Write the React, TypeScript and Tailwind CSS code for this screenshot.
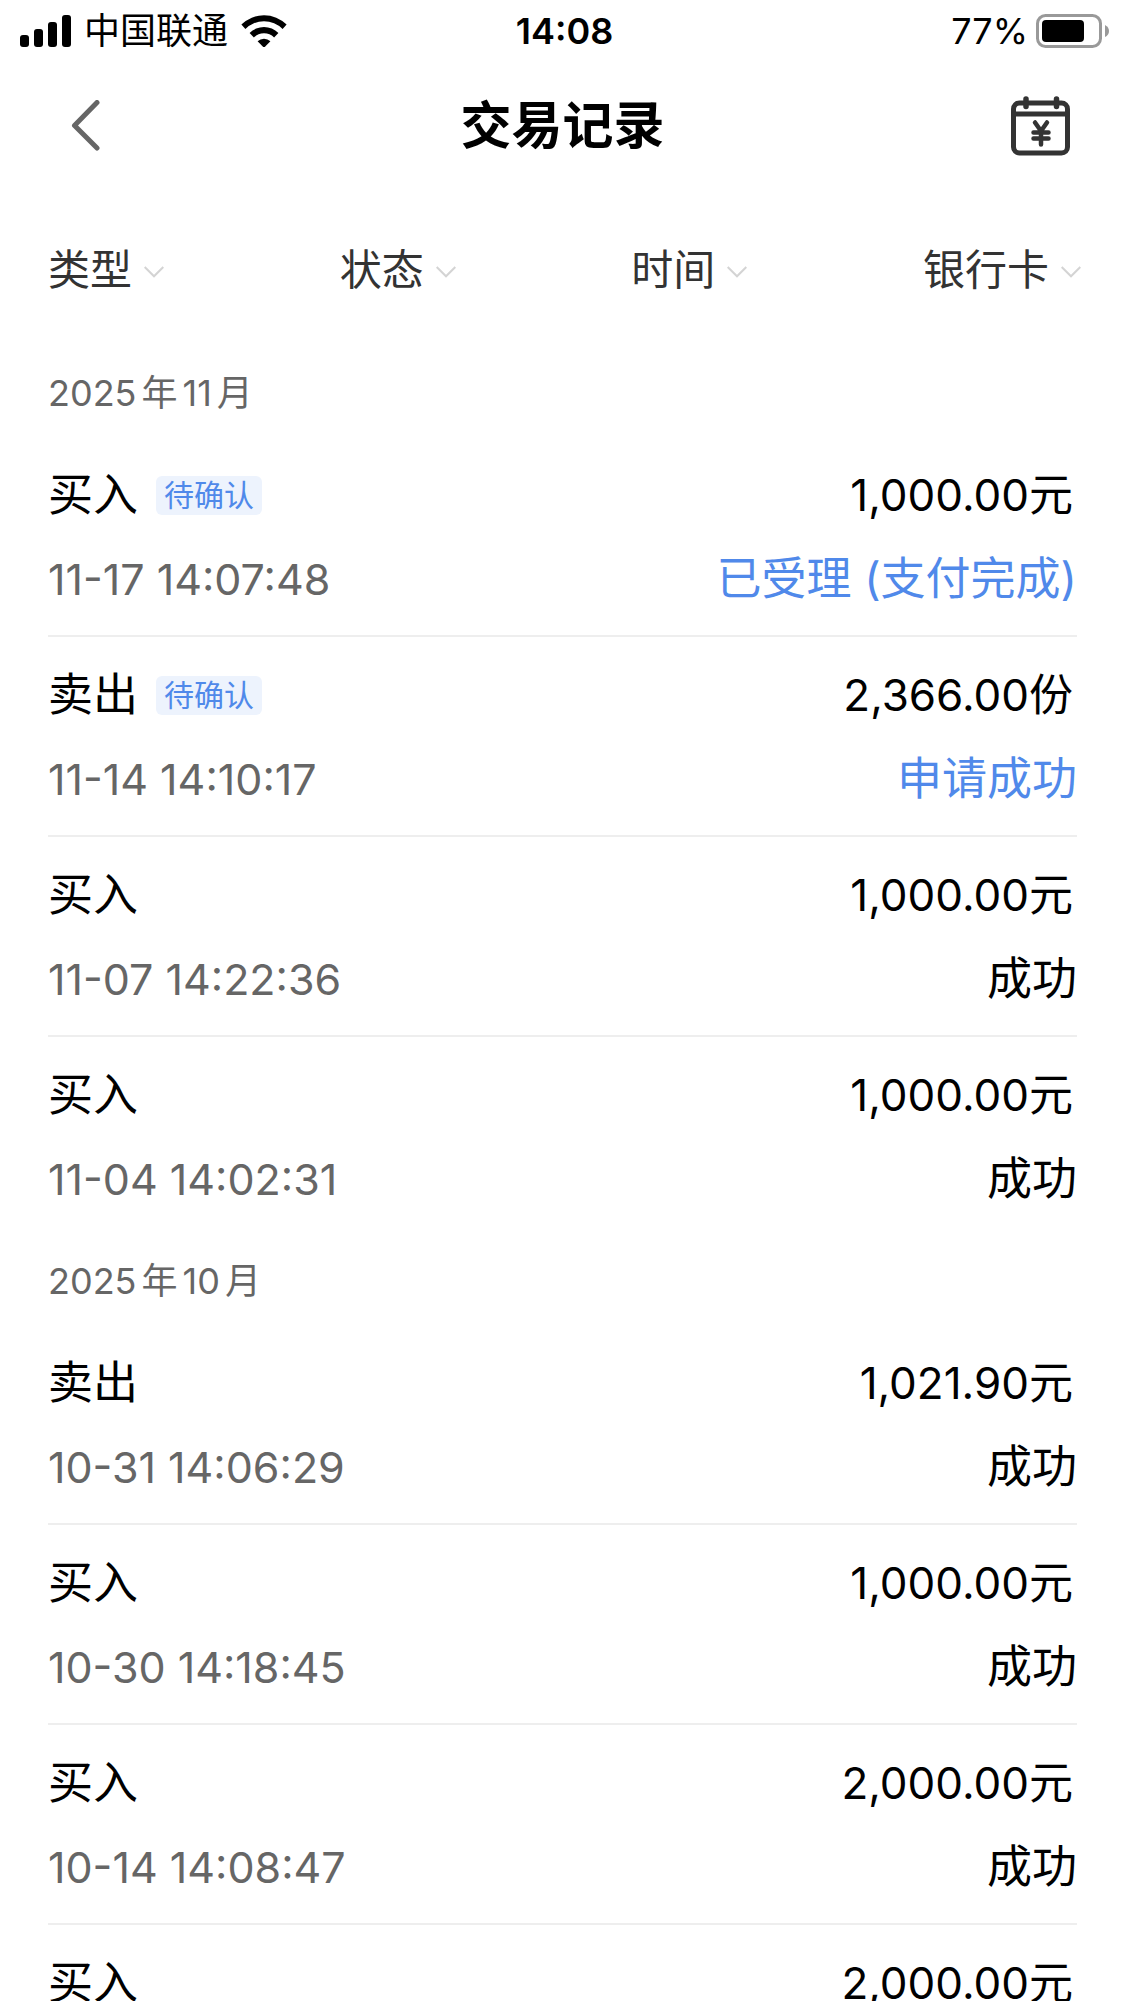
type TradeRecord = {
  type: string;
  pending?: boolean;
  time: string;
  amount: string;
  status: string;
};

type MonthGroup = {
  year: string;
  month: string;
  records: TradeRecord[];
};

const filters = ["类型", "状态", "时间", "银行卡"];

const groups: MonthGroup[] = [
  {
    year: "2025",
    month: "11",
    records: [
      {
        type: "买入",
        pending: true,
        time: "11-17 14:07:48",
        amount: "1,000.00元",
        status: "已受理 (支付完成)",
      },
      {
        type: "卖出",
        pending: true,
        time: "11-14 14:10:17",
        amount: "2,366.00份",
        status: "申请成功",
      },
      { type: "买入", time: "11-07 14:22:36", amount: "1,000.00元", status: "成功" },
      { type: "买入", time: "11-04 14:02:31", amount: "1,000.00元", status: "成功" },
    ],
  },
  {
    year: "2025",
    month: "10",
    records: [
      { type: "卖出", time: "10-31 14:06:29", amount: "1,021.90元", status: "成功" },
      { type: "买入", time: "10-30 14:18:45", amount: "1,000.00元", status: "成功" },
      { type: "买入", time: "10-14 14:08:47", amount: "2,000.00元", status: "成功" },
      { type: "买入", time: "10-13 14:11:05", amount: "2,000.00元", status: "成功" },
    ],
  },
];

function SignalIcon() {
  return (
    <svg className="w-[51px] h-8" viewBox="0 0 51 32" aria-hidden="true">
      <rect x="0" y="20" width="9" height="12" rx="3" />
      <rect x="14" y="14" width="9" height="18" rx="3" />
      <rect x="28" y="7" width="9" height="25" rx="3" />
      <rect x="42" y="0" width="9" height="32" rx="3" />
    </svg>
  );
}

function WifiIcon() {
  return (
    <svg className="w-[46px] h-8" viewBox="0 0 46 32" aria-hidden="true">
      <path d="M0.4 9.6a32 32 0 0 1 45.2 0l-4 4.4a26.3 26.3 0 0 0-37.2 0z" />
      <path d="M8.6 18a20.4 20.4 0 0 1 28.8 0l-4.3 4.5a14.3 14.3 0 0 0-20.2 0z" />
      <path d="M16.6 26.2a9.4 9.4 0 0 1 12.8 0l-5.4 5.5q-1 .9-2 0z" />
    </svg>
  );
}

function BatteryIcon() {
  return (
    <svg className="w-[73px] h-[34px]" viewBox="0 0 73 34" aria-hidden="true">
      <rect
        x="1.5"
        y="1.5"
        width="63"
        height="31"
        rx="8"
        fill="none"
        stroke="#999"
        strokeWidth="3"
      />
      <rect x="6" y="6" width="42" height="22" rx="4" />
      <path d="M69 11q4 2 4 6t-4 6z" fill="#999" />
    </svg>
  );
}

function StatusBar() {
  return (
    <div className="grid grid-cols-[1fr_auto_1fr] items-center h-[62px] pl-5 pr-4 text-[36px] leading-[44px]">
      <div className="flex items-center">
        <SignalIcon />
        <span className="mx-[13px]">中国联通</span>
        <WifiIcon />
      </div>
      <span className="font-semibold">14:08</span>
      <div className="flex items-center justify-end gap-2">
        <span>77%</span>
        <BatteryIcon />
      </div>
    </div>
  );
}

function Header() {
  return (
    <header className="grid grid-cols-[1fr_auto_1fr] items-center h-[128px] px-[54px]">
      <button
        type="button"
        aria-label="返回"
        className="justify-self-start pl-4"
      >
        <svg
          className="w-[30px] h-[52px]"
          viewBox="0 0 30 52"
          fill="none"
          stroke="#666"
          strokeWidth="5"
          strokeLinecap="round"
          strokeLinejoin="round"
        >
          <path d="M27 2.5 4.500 25.500l22.500 22.500" />
        </svg>
      </button>
      <h1 className="text-[51px] leading-[64px] font-bold">交易记录</h1>
      <button type="button" aria-label="交易日历" className="justify-self-end">
        <svg
          className="w-[60px] h-[60px]"
          viewBox="0 0 60 60"
          fill="none"
          stroke="#333"
          strokeWidth="5"
          strokeLinecap="round"
          strokeLinejoin="round"
        >
          <rect x="2.5" y="7" width="54" height="50" rx="6" />
          <path d="M3 18h53" />
          <path d="M15 3v7.500M45.500 3v7.500" strokeWidth="5.500" />
          <path
            d="M24 26.500l6 8.500 6-8.500M30 35v13.500M22.500 36.500h15M22.500 42.500h15"
            strokeWidth="4.500"
          />
        </svg>
      </button>
    </header>
  );
}

function FilterBar() {
  return (
    <div className="flex items-center justify-between h-[159px] pl-12 pr-11 text-[#333]">
      {filters.map((name) => (
        <label key={name} className="flex items-center gap-[11px]">
          <select
            aria-label={name}
            className="appearance-none bg-transparent text-[42px] leading-[56px]"
          >
            <option>{name}</option>
          </select>
          <svg
            className="w-5 h-3 mt-1 pointer-events-none"
            viewBox="0 0 20 12"
            fill="none"
            stroke="#d4d4d4"
            strokeWidth="2"
          >
            <path d="M.7 1 10 10.300 19.300 1" />
          </svg>
        </label>
      ))}
    </div>
  );
}

function RecordItem({ record }: { record: TradeRecord }) {
  return (
    <li className="h-[200px] py-4 border-b-2 border-[#eee] last:border-transparent leading-[84px]">
      <div className="flex items-center justify-between">
        <div className="flex items-center gap-[18px]">
          <span className="text-[45px]">{record.type}</span>
          {record.pending && (
            <span className="px-2 rounded-md bg-[#edf3fd] text-[#5089ea] text-[30px] leading-[39px]">
              待确认
            </span>
          )}
        </div>
        <span className="pr-1 text-[44px]">{record.amount}</span>
      </div>
      <div className="flex items-center justify-between">
        <time className="text-[43px] text-[#666]">{record.time}</time>
        <span
          className={
            record.pending ? "text-[45px] text-[#5089ea]" : "text-[45px]"
          }
        >
          {record.status}
        </span>
      </div>
    </li>
  );
}

export default function App() {
  return (
    <div className="flex flex-col h-screen bg-white text-black font-['Inter','Noto_Sans_CJK_SC',sans-serif]">
      <StatusBar />
      <Header />
      <FilterBar />
      <main className="flex-1 min-h-0 px-12 overflow-y-auto [scrollbar-width:none]">
        {groups.map((group) => (
          <section key={group.year + group.month}>
            <h2 className="flex gap-[5px] text-[36px] leading-[88px] text-[#666]">
              <span>{group.year}</span>
              <span>年</span>
              <span>{group.month}</span>
              <span>月</span>
            </h2>
            <ul>
              {group.records.map((record) => (
                <RecordItem key={record.time} record={record} />
              ))}
            </ul>
          </section>
        ))}
      </main>
    </div>
  );
}
